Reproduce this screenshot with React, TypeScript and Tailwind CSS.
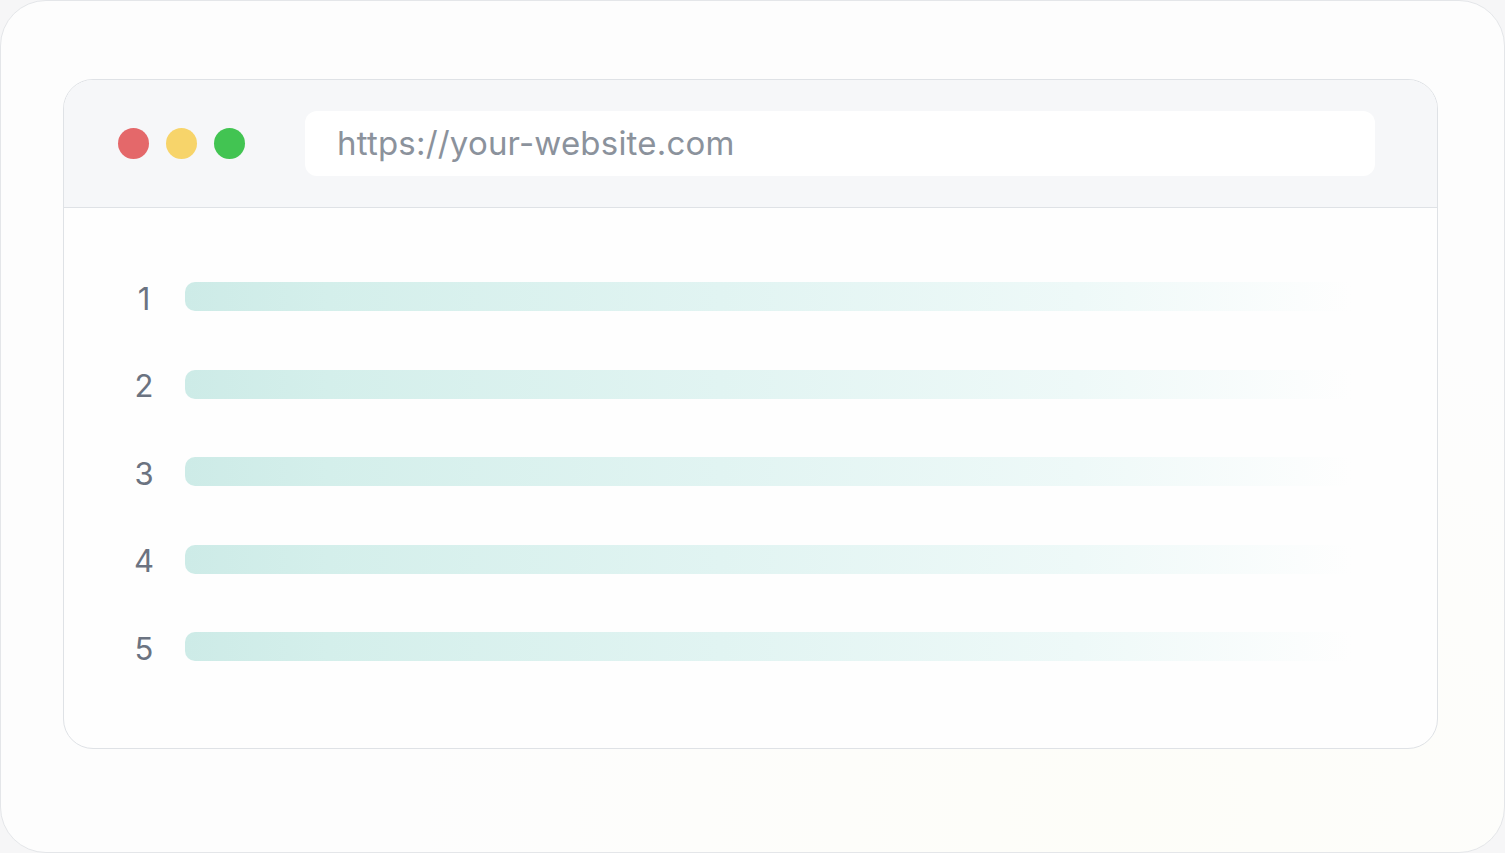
const rows = [1, 2, 3, 4, 5];

const dots = ["bg-[#e4686a]", "bg-[#f7d46a]", "bg-[#42c452]"];

export default function App() {
  return (
    <div className="h-[853px] w-[1505px] overflow-hidden bg-[#f6f6f7] font-['Inter','Liberation_Sans',sans-serif]">
      <div className="h-full w-full rounded-[46px] border border-[#e4e6e9] bg-[radial-gradient(ellipse_at_75%_95%,#fdfdf8_0%,#fdfdfd_45%)] pl-[62px] pr-[66px] pt-[78px]">
        <div className="overflow-hidden rounded-[30px] border border-[#dfe2e6] bg-[#fefefe]">
          <header className="flex items-center border-b border-[#dfe2e6] bg-[#f6f7f9] pb-[31px] pl-[54px] pr-[62px] pt-[31px]">
            <div className="flex items-center gap-[17px]">
              {dots.map((c) => (
                <span key={c} className={`h-[31px] w-[31px] rounded-full ${c}`} />
              ))}
            </div>
            <div className="ml-[60px] flex h-[65px] flex-1 items-center rounded-[12px] bg-white pl-[32px] text-[33px] tracking-[0.2px] text-[#8b929c]">
              https://your-website.com
            </div>
          </header>
          <div className="flex flex-col gap-[58.5px] pb-[87px] pl-[70px] pr-[62px] pt-[74px]">
            {rows.map((n) => (
              <div key={n} className="flex h-[29px] items-center">
                <span className="w-[20px] pt-[3px] text-center text-[31px] leading-none text-[#6b7381]">{n}</span>
                <div className="ml-[31px] h-[29px] flex-1 rounded-[10px] bg-[linear-gradient(90deg,#cdebe7_0%,#d4efeb_12%,#e1f4f2_45%,#eef9f8_75%,rgba(255,255,255,0)_98%)]" />
              </div>
            ))}
          </div>
        </div>
      </div>
    </div>
  );
}
